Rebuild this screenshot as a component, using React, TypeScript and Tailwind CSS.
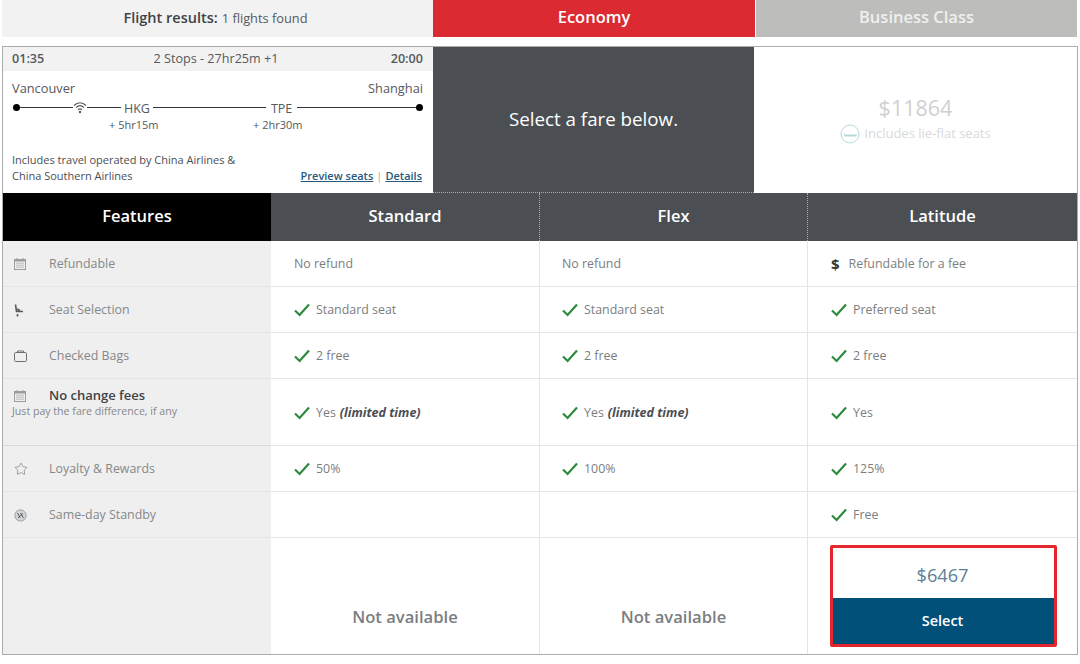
import { Star } from 'lucide-react';

function Check() {
  return (
    <svg width="16" height="14" viewBox="0 0 16 14" className="shrink-0">
      <path d="M1 7.5 L5.6 12 L15 1.5" fill="none" stroke="#2c8a3c" strokeWidth="2.2" />
    </svg>
  );
}

function CalendarGrid() {
  return (
    <svg width="12" height="12" viewBox="0 0 12 12" className="shrink-0">
      <rect x="0.5" y="1.5" width="11" height="10" fill="none" stroke="#9a9d9f" strokeWidth="1" />
      <path d="M0.5 1.5 H11.5 V3.5 H0.5 Z" fill="#9a9d9f" />
      <path d="M2.5 5.2 H9.5 M2.5 7.2 H9.5 M2.5 9.2 H9.5" stroke="#85888b" strokeWidth="1" strokeDasharray="1 1" />
      <path d="M3 0 V2 M9 0 V2" stroke="#9a9d9f" strokeWidth="1" />
    </svg>
  );
}

function Bag() {
  return (
    <svg width="13" height="12" viewBox="0 0 13 12" className="shrink-0">
      <rect x="0.5" y="2.5" width="12" height="9" rx="1.2" fill="none" stroke="#6d7073" strokeWidth="1" />
      <path d="M3.5 2.5 V1 H9.5 V2.5" fill="none" stroke="#6d7073" strokeWidth="1" />
    </svg>
  );
}

function Seat() {
  return (
    <svg width="12" height="13" viewBox="0 0 12 13" className="shrink-0">
      <path d="M1.5 0.5 L2.5 7.5 L9 7.5 M3.5 10 L3.5 12.5 M3 5 L6 6.5" fill="none" stroke="#55595d" strokeWidth="1.6" />
    </svg>
  );
}

function Standby() {
  return (
    <svg width="13" height="13" viewBox="0 0 13 13" className="shrink-0">
      <circle cx="6.5" cy="6.5" r="5.6" fill="#d4d5d6" stroke="#9a9d9f" strokeWidth="1" />
      <path d="M3.5 4 L6 8.5 M6.5 4 L9.5 9 M4 9 L9 4.5" fill="none" stroke="#55595d" strokeWidth="1" />
    </svg>
  );
}

function Wifi() {
  return (
    <svg width="14" height="13" viewBox="0 0 14 13" className="shrink-0">
      <path d="M1 4.5 C4.5 0.8 9.5 0.8 13 4.5 M3 6.7 C5.4 4.3 8.6 4.3 11 6.7 M5 8.8 C6.2 7.7 7.8 7.7 9 8.8" fill="none" stroke="#55595d" strokeWidth="1.2" />
      <circle cx="7" cy="11" r="1.2" fill="#55595d" />
    </svg>
  );
}

function LieFlat() {
  return (
    <svg width="20" height="20" viewBox="0 0 20 20" className="shrink-0">
      <circle cx="10" cy="10" r="9" fill="none" stroke="#b5d8dc" strokeWidth="1" />
      <path d="M3.5 7 L5 10.5 L16.5 10.5 L16.5 12.5 L4.5 12.5 Z" fill="#b5d8dc" />
    </svg>
  );
}

const rows = [
  { icon: <CalendarGrid />, label: 'Refundable', cells: ['No refund', 'No refund', 'Refundable for a fee'], marks: ['none', 'none', 'dollar'] },
  { icon: <Seat />, label: 'Seat Selection', cells: ['Standard seat', 'Standard seat', 'Preferred seat'], marks: ['check', 'check', 'check'] },
  { icon: <Bag />, label: 'Checked Bags', cells: ['2 free', '2 free', '2 free'], marks: ['check', 'check', 'check'] },
];
const rowsAfter = [
  { icon: <Star size={14} strokeWidth={1.1} />, label: 'Loyalty & Rewards', cells: ['50%', '100%', '125%'], marks: ['check', 'check', 'check'] },
  { icon: <Standby />, label: 'Same-day Standby', cells: ['', '', 'Free'], marks: ['none', 'none', 'check'] },
];

// flex column sits one pixel tighter than the others
const cellClass = [
  'flex items-center border-r border-b border-[#e3e4e5] pl-[23px] pt-px text-[12.4px] text-[#7b7e81]',
  'flex items-center border-r border-b border-[#e3e4e5] pl-[22px] pt-px text-[12.4px] text-[#7b7e81]',
  'flex items-center border-b border-[#e3e4e5] pl-[23px] pt-px text-[12.4px] text-[#7b7e81]',
];

function Cell({ text, mark, col }: { text: string; mark: string; col: number }) {
  return (
    <div className={cellClass[col]}>
      {mark === 'check' && <span className="mr-[6px] flex"><Check /></span>}
      {mark === 'dollar' && <span className="mr-[9px] text-[15px] font-bold text-[#33373b]">$</span>}
      {text}
    </div>
  );
}

function FeatureLabel({ icon, label }: { icon: React.ReactNode; label: string }) {
  return (
    <div className="flex items-center bg-[#efefef] border-b border-[#e5e5e5] pt-px text-[12.4px] text-[#85888b]">
      <span className="w-[46px] pl-[11px] flex text-[#6d7073]">{icon}</span>
      {label}
    </div>
  );
}

export default function App() {
  return (
    <div className="w-[1080px] h-[664px] bg-white overflow-hidden pl-[2px] font-['Open_Sans',sans-serif]">
      {/* Tabs */}
      <div className="flex h-[37px] w-[1075px]">
        <div className="w-[431px] bg-[#f2f2f2] flex items-center justify-center gap-[4px] pb-px pr-[4px]">
          <span className="text-[14.5px] font-semibold text-[#3f4347]">Flight results:</span>
          <span className="text-[12.8px] text-[#55595d] pt-px">1 flights found</span>
        </div>
        <div className="w-[322px] bg-[#dc2a33] flex items-center justify-center pb-[3px] text-white text-[16.5px] font-semibold">Economy</div>
        <div className="flex-1 ml-px bg-[#bdbdbb] flex items-center justify-center pb-[3px] text-[#f0f0ee] text-[16.5px] font-semibold">Business Class</div>
      </div>

      <div className="mt-[9px] w-[1076px] h-[609px] border border-[#a9abac] flex flex-col">
        {/* Flight summary */}
        <div className="flex h-[146px]">
          <div className="w-[430px] flex flex-col text-[#55595d]">
            <div className="h-[24px] bg-[#f2f2f2] flex items-center justify-between pl-[9px] pr-[10px] pt-px text-[12.6px]">
              <span className="font-semibold">01:35</span>
              <span className="pr-[3px]">2 Stops - 27hr25m +1</span>
              <span className="font-semibold">20:00</span>
            </div>
            <div className="flex justify-between pl-[9px] pr-[10px] mt-[10px] text-[12.8px] leading-[15px]">
              <span>Vancouver</span>
              <span>Shanghai</span>
            </div>
            <div className="flex items-center px-[10px] h-[17px] mt-[3px]">
              <span className="w-[7px] h-[7px] rounded-full bg-black shrink-0" />
              <span className="w-[53px] h-px bg-[#33373b]" />
              <Wifi />
              <span className="w-[34px] h-px bg-[#33373b]" />
              <span className="px-[3px] pt-[3px] text-[12.5px] leading-none">HKG</span>
              <span className="w-[113px] h-px bg-[#33373b]" />
              <span className="px-[5px] pt-[3px] text-[12.5px] leading-none">TPE</span>
              <span className="flex-1 h-px bg-[#33373b]" />
              <span className="w-[7px] h-[7px] rounded-full bg-black shrink-0" />
            </div>
            <div className="flex text-[11px] leading-[14px] mt-[2px] pl-[106px]">
              <span className="w-[144px]">+ 5hr15m</span>
              <span>+ 2hr30m</span>
            </div>
            <div className="flex justify-between items-end pl-[9px] pr-[11px] mt-[20px] text-[11px] leading-[16px] text-[#4a4e52]">
              <span>Includes travel operated by China Airlines &<br />China Southern Airlines</span>
              <span className="flex gap-[3px] font-semibold text-[#27597e]">
                <span className="underline">Preview seats</span>
                <span className="font-normal text-[#aaa]">|</span>
                <span className="underline">Details</span>
              </span>
            </div>
          </div>
          <div className="w-[321px] bg-[#4b4f54] flex items-center justify-center text-white text-[18.75px] border-b border-dotted border-[#a9abac]">
            Select a fare below.
          </div>
          <div className="flex-1 flex flex-col items-center justify-center pb-px">
            <span className="text-[21.5px] leading-[27px] -mt-[1px] text-[#cfd0d1]">$11864</span>
            <span className="flex items-center gap-[4px] mt-[3px] text-[13px] text-[#d8d9da]"><LieFlat />Includes lie-flat seats</span>
          </div>
        </div>

        {/* Fare table */}
        <div className="grid grid-cols-[268px_269px_268px_1fr] flex-1 grid-rows-[48px_46px_46px_46px_67px_46px_46px_1fr]">
          <div className="bg-black text-white text-[16.5px] font-semibold flex items-center justify-center pb-[2px]">Features</div>
          <div className="bg-[#4b4f54] text-white text-[16.5px] font-semibold flex items-center justify-center pb-[2px] border-r border-dotted border-[#a9abac]">Standard</div>
          <div className="bg-[#4b4f54] text-white text-[16.5px] font-semibold flex items-center justify-center pb-[2px] border-r border-dotted border-[#a9abac]">Flex</div>
          <div className="bg-[#4b4f54] text-white text-[16.5px] font-semibold flex items-center justify-center pb-[2px]">Latitude</div>

          {rows.map((r) => (
            <div key={r.label} className="contents">
              <FeatureLabel icon={r.icon} label={r.label} />
              {r.cells.map((c, i) => <Cell key={i} text={c} mark={r.marks[i]} col={i} />)}
            </div>
          ))}

          <div className="bg-[#efefef] border-b border-[#d9d9d9] pl-[9px] pt-[8px]">
            <div className="flex items-center text-[13px] leading-[17px] font-semibold text-[#3f4347]">
              <span className="w-[37px] pl-[2px] flex"><CalendarGrid /></span>
              No change fees
            </div>
            <div className="text-[10.6px] text-[#85888b] leading-[14px]">Just pay the fare difference, if any</div>
          </div>
          {['Yes', 'Yes', 'Yes'].map((c, i) => (
            <div key={i} className={cellClass[i]}>
              <span className="mr-[6px] flex"><Check /></span>
              <span className="pt-px">{c}</span>
              {i < 2 && <b className="italic text-[#4a4e52] ml-[4px] pt-px text-[12.5px]">(limited time)</b>}
            </div>
          ))}

          {rowsAfter.map((r) => (
            <div key={r.label} className="contents">
              <FeatureLabel icon={r.icon} label={r.label} />
              {r.cells.map((c, i) => <Cell key={i} text={c} mark={r.marks[i]} col={i} />)}
            </div>
          ))}

          <div className="bg-[#efefef]" />
          <div className="border-r border-[#e3e4e5] flex items-center justify-center pt-[43px] text-[16.6px] font-semibold text-[#7b7e81]">Not available</div>
          <div className="border-r border-[#e3e4e5] flex items-center justify-center pt-[43px] text-[16.6px] font-semibold text-[#7b7e81]">Not available</div>
          <div className="pl-[22px] pt-[7px]">
            <div className="w-[227px] h-[102px] border-[3px] border-[#e5262b] rounded-[2px] flex flex-col">
              <div className="h-[50px] flex items-center justify-center pt-[5px] pr-[2px] text-[18.2px] text-[#5d7f95]">$6467</div>
              <div className="flex-1 bg-[#00507a] flex items-center justify-center pr-[2px] text-white text-[14.5px] font-semibold">Select</div>
            </div>
          </div>
        </div>
      </div>
    </div>
  );
}
